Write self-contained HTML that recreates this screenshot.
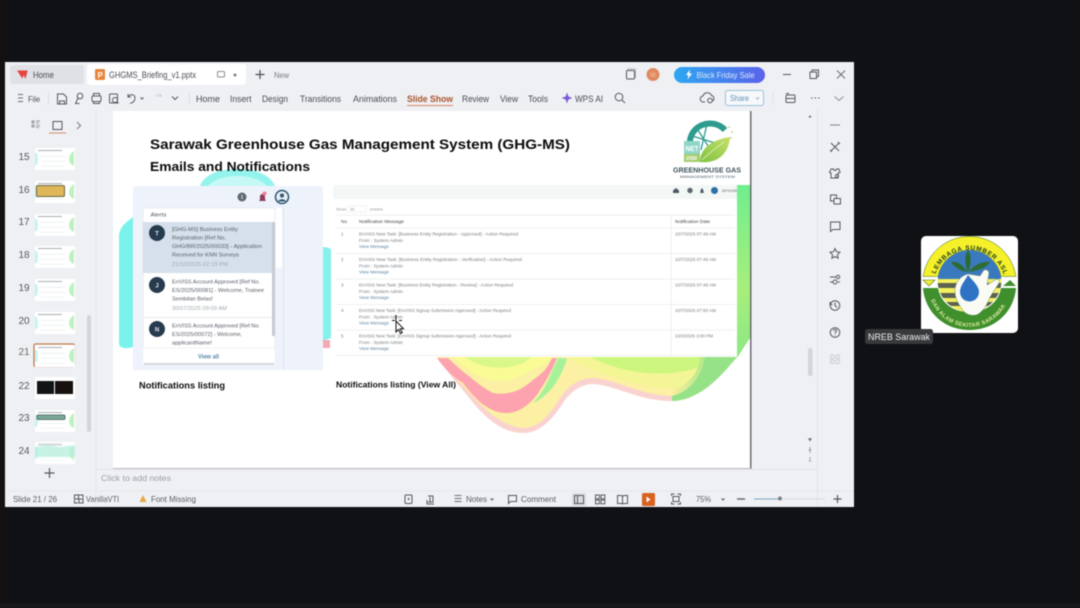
<!DOCTYPE html>
<html><head><meta charset="utf-8"><title>GHGMS Briefing</title>
<style>
html,body{margin:0;padding:0;background:#101114;width:1080px;height:608px;overflow:hidden}
svg{display:block;filter:blur(.5px)}
text{font-family:"Liberation Sans",sans-serif}
.u{font-size:9px;fill:#4a4c52}
.n{font-size:5px;fill:#5a5f66}
.i{fill:none;stroke:#55585e;stroke-width:1}
.num{font-size:10px;fill:#55585c;text-anchor:middle}
</style></head><body>
<svg width="1080" height="608" viewBox="0 0 1080 608" xmlns="http://www.w3.org/2000/svg">
<defs>
<linearGradient id="bf" x1="0" x2="1"><stop offset="0" stop-color="#2ea7f2"/><stop offset="1" stop-color="#5a63ea"/></linearGradient>
<linearGradient id="col" x1="0" x2="0" y1="0" y2="1"><stop offset="0" stop-color="#70ee8e"/><stop offset=".6" stop-color="#a8ee7c"/><stop offset="1" stop-color="#8be884"/></linearGradient>
<linearGradient id="rg" x1="0" x2="1" y1="0" y2="0"><stop offset="0" stop-color="#f6eea0"/><stop offset=".45" stop-color="#b9e88b"/><stop offset="1" stop-color="#86e486"/></linearGradient>
<linearGradient id="lf" x1="0" x2="1" y1="1" y2="0"><stop offset="0" stop-color="#7fc241"/><stop offset="1" stop-color="#c6e06a"/></linearGradient>
<clipPath id="stc"><circle cx="969.500" cy="280" r="32"/></clipPath>
<g id="th">
<rect x="0" y="0" width="40" height="22" fill="#fff"/>
<path d="M0 5h2q2 6 0 12H0z" fill="#c4f5f1"/>
<path d="M39 3q-5 3-5 8t5 7z" fill="#bdf2c0"/>
<rect x="3" y="2" width="24" height="1" fill="#a4afb3"/>
<rect x="6" y="8" width="24" height=".6" fill="#e0e6e8"/>
<rect x="6" y="13" width="24" height=".6" fill="#e4e9ea"/>
<rect x="6" y="18" width="24" height=".6" fill="#e6ebeb"/>
</g>
</defs>

<rect width="1080" height="608" fill="#101114"/>
<rect x="0" y="0" width="5" height="608" fill="#141210"/>
<rect x="0" y="603" width="1080" height="5" fill="#17181a"/>

<!-- window -->
<rect x="5" y="62" width="849" height="445" fill="#eef0f4"/>
<!-- tabs -->
<rect x="10" y="65" width="74" height="19" rx="3" fill="#dfe1e6"/>
<path d="M18 71h9l-1.600 6.500-1.800-3.600-1.400 3.600z" fill="#e4463f" stroke="#e4463f" stroke-width="1"/>
<text x="33" y="78" class="u" textLength="21" lengthAdjust="spacingAndGlyphs">Home</text>
<rect x="87" y="64" width="159" height="21" rx="3" fill="#fff"/>
<rect x="95" y="69" width="10" height="11" rx="1.500" fill="#e8843a"/>
<text x="97.500" y="78" font-size="8" fill="#fff" font-weight="bold">P</text>
<text x="109" y="78" class="u" textLength="87" lengthAdjust="spacingAndGlyphs">GHGMS_Briefing_v1.pptx</text>
<rect x="217.500" y="71.500" width="7" height="5.500" rx="1" class="i" style="stroke:#8a8d93"/>
<circle cx="235" cy="75" r="1.500" fill="#7b7e84"/>
<path d="M260 70v9M255.500 74.500h9" stroke="#4a4c52" stroke-width="1.200"/>
<text x="274" y="78" font-size="8.500" fill="#7b7e84" textLength="15" lengthAdjust="spacingAndGlyphs">New</text>

<rect x="626.500" y="70.500" width="8" height="8.500" rx="1.200" class="i"/>
<path d="M628 70v-1h7.500v9" fill="none" stroke="#9a9da3" stroke-width=".7"/>
<circle cx="653" cy="74.500" r="6.500" fill="#e08a5e"/>
<text x="653" y="77" font-size="6" fill="#f6c7ae" text-anchor="middle">W</text>
<rect x="674" y="67" width="91" height="16" rx="8" fill="url(#bf)"/>
<path d="M690 69.500l-4 5.500h2.500l-1 4.500 4.500-6h-2.700z" fill="#fff"/>
<text x="696.500" y="78" font-size="8.500" fill="#dbe6fb" textLength="58" lengthAdjust="spacingAndGlyphs">Black Friday Sale</text>
<path d="M783 74.500h8" stroke="#55585e" stroke-width="1"/>
<rect x="810" y="72" width="6.500" height="6.500" class="i"/><path d="M812 72v-2h6.500v6.500h-2" class="i"/>
<path d="M837 70.500l8 8M845 70.500l-8 8" stroke="#6a6d73" stroke-width="1"/>

<!-- ribbon -->
<path d="M18 94.500h5M18 98h5M18 101.500h5" stroke="#6a6d73" stroke-width=".9"/>
<text x="28" y="102" class="u" style="font-size:8.500px" textLength="12" lengthAdjust="spacingAndGlyphs">File</text>
<path d="M48.500 92v13" stroke="#dcdee2"/>
<path d="M57.500 94h6l3 3v7h-9z" class="i"/><path d="M59.500 104v-3h5v3" class="i" stroke-width=".8"/>
<circle cx="80" cy="96" r="2.800" class="i"/><path d="M78 98l-2.500 5.500h4" class="i"/>
<rect x="92" y="96" width="9" height="5.500" rx="1" class="i"/><path d="M93.500 96v-2.500h6V96M93.500 101v2.500h6V101" class="i"/>
<rect x="109.500" y="94" width="8" height="9" rx="1" class="i"/><circle cx="115" cy="100" r="2.500" fill="#eef0f4" stroke="#55585e"/><path d="M117 102l1.500 1.500" class="i"/>
<path d="M128 96.500c3-3 7-2 7 1.500s-3 5-5 5.500M128 94v3h3" class="i"/>
<path d="M140.500 97.500l1.500 1.500 1.500-1.500" class="i" stroke-width=".8"/>
<path d="M161 96c-2-2.500-5-1.500-5.500 1M161 94v2.500h-2.500" fill="none" stroke="#cfd2d6"/>
<path d="M172 96.500l3 3 3-3" class="i"/>
<path d="M189.500 92v13" stroke="#dcdee2"/>
<text x="196" y="102" class="u" textLength="24" lengthAdjust="spacingAndGlyphs">Home</text>
<text x="230" y="102" class="u" textLength="21.500" lengthAdjust="spacingAndGlyphs">Insert</text>
<text x="262" y="102" class="u" textLength="26" lengthAdjust="spacingAndGlyphs">Design</text>
<text x="300" y="102" class="u" textLength="41" lengthAdjust="spacingAndGlyphs">Transitions</text>
<text x="353" y="102" class="u" textLength="44" lengthAdjust="spacingAndGlyphs">Animations</text>
<text x="407" y="102" font-size="9" font-weight="bold" fill="#a8552b" textLength="46" lengthAdjust="spacingAndGlyphs">Slide Show</text>
<text x="462" y="102" class="u" textLength="27" lengthAdjust="spacingAndGlyphs">Review</text>
<text x="500" y="102" class="u" textLength="18" lengthAdjust="spacingAndGlyphs">View</text>
<text x="528" y="102" class="u" textLength="20" lengthAdjust="spacingAndGlyphs">Tools</text>
<rect x="407" y="105" width="46" height="1" fill="#d98a5f"/>
<path d="M567 92.500l1.400 4 4.100 1.500-4.100 1.500-1.400 4-1.400-4-4.100-1.500 4.100-1.500z" fill="#7a5cd6"/>
<text x="575" y="102" class="u" textLength="28" lengthAdjust="spacingAndGlyphs">WPS AI</text>
<circle cx="619" cy="97" r="3.800" class="i"/><path d="M622 100l3 3" class="i"/>
<path d="M705 102h-1.500a3 3 0 0 1-.5-6 4.500 4.500 0 0 1 8.500-.5 3 3 0 0 1 1 5.500" class="i"/><circle cx="710" cy="100.500" r="2.300" class="i" stroke-width=".8"/>
<rect x="725.500" y="90.500" width="38" height="15" rx="2" fill="#f6f8fb" stroke="#9dc2dc"/>
<text x="730" y="101" font-size="8.500" fill="#5f93b8" textLength="19" lengthAdjust="spacingAndGlyphs">Share</text>
<path d="M756 97.500l1.500 1.500 1.500-1.500" fill="none" stroke="#7ca7c4" stroke-width=".8"/>
<path d="M773 92v13" stroke="#e2e4e8"/>
<rect x="786" y="95" width="9" height="7.500" rx="1" class="i"/><path d="M786 93.500h3M786 98.500h9" class="i" stroke-width=".8"/>
<path d="M811 98h1.500M814.500 98h1.500M818 98h1.500" stroke="#5a5d63" stroke-width="1"/>
<path d="M834.500 96.500l4.500 4 4.500-4" fill="none" stroke="#8a8d93" stroke-width="1"/>

<!-- sidebar -->
<rect x="95.500" y="110" width="1" height="397" fill="#e3e5e9"/>
<path d="M32 121h2v2h-2zM32 125h2v2h-2z" fill="none" stroke="#777a80" stroke-width=".8"/><path d="M36 121h4M36 123h3M36 125.500h4M36 127.500h3" stroke="#777a80" stroke-width=".8"/>
<rect x="53" y="121.500" width="9" height="8" class="i"/>
<rect x="49" y="132.500" width="17" height="1" fill="#d98a5f"/>
<path d="M77 122l3.500 3.500-3.500 3.500" fill="none" stroke="#777a80" stroke-width="1"/>

<text x="24" y="160" class="num">15</text><use href="#th" x="35" y="148"/>
<text x="24" y="193" class="num">16</text><use href="#th" x="35" y="181"/>
<rect x="36.500" y="185.500" width="28" height="11" rx="1.500" fill="#dfb65a" stroke="#6b6845" stroke-width="1"/>
<text x="24" y="225" class="num">17</text><use href="#th" x="35" y="214"/>
<text x="24" y="258" class="num">18</text><use href="#th" x="35" y="246"/>
<text x="24" y="291" class="num">19</text><use href="#th" x="35" y="279"/>
<text x="24" y="324" class="num">20</text><use href="#th" x="35" y="312"/>
<text x="24" y="355" class="num" style="fill:#6d6a68">21</text>
<rect x="34" y="344" width="40.500" height="22.500" rx="1.500" fill="#fff" stroke="#c07a4a" stroke-width="1.300"/>
<use href="#th" x="35" y="345"/>
<text x="24" y="389" class="num">22</text>
<rect x="35" y="377" width="40" height="22" fill="#fff"/><rect x="37" y="381" width="17" height="13" fill="#101416"/><rect x="55" y="381" width="18" height="13" fill="#16100e"/>
<text x="24" y="421" class="num">23</text><use href="#th" x="35" y="410"/>
<rect x="37" y="415" width="28" height="4.500" rx="1" fill="#79a99b" stroke="#3f5a52" stroke-width=".8"/>
<text x="24" y="454" class="num">24</text>
<svg x="35" y="442" width="40" height="18" viewBox="0 0 40 18"><use href="#th"/><path d="M0 5q14-3 24 0l16-2v12H0z" fill="#b6f0dc" opacity=".75"/></svg>
<rect x="87" y="315" width="4" height="117" rx="2" fill="#d3d5da"/>
<path d="M49.500 468v10M44.500 473h10" stroke="#55585e" stroke-width="1.200"/>

<!-- work area + slide shadow -->
<rect x="751" y="110" width="66" height="360" fill="#eff0f4"/>
<rect x="113" y="111" width="637" height="358" fill="#fff"/>
<rect x="750" y="111" width="1.500" height="358" fill="#6b6d70"/>
<rect x="113" y="468" width="638" height="1.300" fill="#b9bbbf"/>
<rect x="817" y="110" width="1" height="397" fill="#e1e3e7"/>
<rect x="808" y="348" width="4.500" height="28" rx="2" fill="#d3d5da"/>
<path d="M810 115l-1.500 2.500h3z" fill="#6a6d73"/>
<path d="M810 441l-1.500-2.500h3zM808.500 450h3M810 447v6M808.500 461h3M810 457v3" fill="#6a6d73" stroke="#6a6d73" stroke-width=".6"/>

<!-- slide decoration -->
<path d="M200 186c4-12 20-17 37-17s33 5 38 17z" fill="#7af0ea" opacity=".8"/>
<path d="M208 186c6-7 18-10 29-10s24 3 30 10z" fill="#c6f9f6"/>
<path d="M133 217c-5 4-14 9-14 20v106c0 6 8 6 14 4z" fill="#7cf2ec"/>
<path d="M323 247c3 0 8 1 8 3v88c-3 1-5 2-8 2z" fill="#86f1ec"/>
<rect x="323" y="340" width="7" height="8" fill="#f5a9b5"/>
<!-- right green column -->
<path d="M737 185H750V338C745 345 741 352 737 358Z" fill="url(#col)"/>
<!-- wave -->
<path d="M437 357C447 372 463 390 475 405C490 422 505 433 523 433C540 433 552 420 563 403C570 392 580 385 592 384C612 384 640 401 670 401C695 401 715 383 730 365L738 356Z" fill="#fad3d0"/>
<path d="M437 357C450 372 465 388 478 402C492 416 507 427 523 428C540 428 550 414 560 398C568 386 578 379 592 378C612 378 640 395 670 396C695 396 715 380 730 362L737 357Z" fill="#fbf0a3"/>
<path d="M455 357C470 376 495 388 520 376C535 369 550 362 556 357Z" fill="#f9fb94"/>
<path d="M465 357C480 368 505 372 525 362L532 357Z" fill="#d9f78a"/>
<path d="M567 357C590 372 630 385 665 388C690 390 715 375 737 357Z" fill="#f4f595"/>
<path d="M590 357C620 372 655 378 690 370C705 366 720 362 730 357Z" fill="#cdf67e"/>
<path d="M672 401C695 401 715 383 730 365L738 356H700C700 372 688 385 674 390Z" fill="url(#rg)"/>
<path d="M672 401C694 401 715 383 730 365L738 356H705C703 375 690 392 672 396Z" fill="#96e287"/>
<path d="M437 358C447 372 455 378 463 383C472 395 480 403 487 407C495 412 500 413 507 413C515 413 522 409 527 405C533 400 537 396 540 390C548 378 553 368 557 358H552C550 362 548 366 545 370C540 375 537 377 533 380C526 386 520 390 513 392C505 394 499 394 493 393C485 389 477 383 470 377C462 371 455 365 448 358Z" fill="#fca3af"/>
<path d="M558 358H567C564 370 558 380 553 387C546 395 540 400 533 403C541 395 546 385 550 376C553 369 556 363 558 358Z" fill="#a6f29a"/>

<!-- Title -->
<text x="150" y="149" font-size="14" font-weight="bold" fill="#0b0b0b" textLength="420" lengthAdjust="spacingAndGlyphs">Sarawak Greenhouse Gas Management System (GHG-MS)</text>
<text x="150" y="171" font-size="12.500" font-weight="bold" fill="#0b0b0b" textLength="160" lengthAdjust="spacingAndGlyphs">Emails and Notifications</text>

<!-- slide logo -->
<path d="M690 144a20 19 0 0 1 35-14" fill="none" stroke="#2d9c8e" stroke-width="6"/>
<path d="M689 135l26 8M696 127l14 22M707 124l-6 26" stroke="#2d9c8e" stroke-width="1.300" fill="none"/>
<path d="M700 162c0-14 12-22 30-25-1 16-12 27-30 25z" fill="url(#lf)"/>
<path d="M702 160c8-8 14-12 22-18" stroke="#e6f3c0" stroke-width=".8" fill="none"/>
<rect x="684" y="141" width="16" height="21" fill="#8fd6c8"/>
<rect x="684" y="154" width="16" height="8" fill="#a3cc6a"/>
<text x="685.500" y="151" font-size="7" font-weight="bold" fill="#fff" textLength="13" lengthAdjust="spacingAndGlyphs">NET</text>
<text x="686" y="160" font-size="5.500" font-weight="bold" fill="#fff" textLength="11" lengthAdjust="spacingAndGlyphs">2050</text>
<circle cx="729" cy="127" r="1" fill="#d2d68a"/><circle cx="732" cy="132" r="1" fill="#d2d68a"/><circle cx="731" cy="138" r="1" fill="#d2d68a"/>
<text x="673" y="172.500" font-size="7" font-weight="bold" fill="#3f5460" textLength="68" lengthAdjust="spacingAndGlyphs">GREENHOUSE GAS</text>
<text x="680" y="178" font-size="4" fill="#4d5f68" textLength="55" lengthAdjust="spacingAndGlyphs">MANAGEMENT SYSTEM</text>

<!-- left panel -->
<rect x="133" y="186" width="190" height="184" fill="#eef3fb"/>
<rect x="143" y="208" width="139" height="60" fill="#fff" opacity=".85"/>
<rect x="283" y="208" width="1" height="162" fill="#e0e6ee"/>
<circle cx="242" cy="197" r="4.500" fill="#606a72"/><rect x="241.500" y="195" width="1" height="4" fill="#dde"/>
<path d="M259 201c1-1 1-2 1-4s1-3 2.500-3 2.500 1 2.500 3 0 3 1 4z" fill="#8f3d5b"/><circle cx="264.500" cy="193.500" r="2" fill="#ef7d95"/>
<circle cx="282" cy="197" r="6.500" fill="#e8eef5" stroke="#2f566f" stroke-width="1.500"/><circle cx="282" cy="195.500" r="2" fill="#2f566f"/><path d="M278 201.500c1-3 7-3 8 0" fill="#2f566f"/>

<rect x="143" y="208" width="132" height="155" rx="2" fill="#fff" stroke="#e3e6ea" stroke-width=".8"/>
<path d="M144 364h130" stroke="#cfd3d8" stroke-width="1.500"/>
<text x="150.500" y="216.500" font-size="5.800" fill="#4f565e" textLength="16" lengthAdjust="spacingAndGlyphs">Alerts</text>
<rect x="143" y="222" width="129" height="51" fill="#d5e0ec"/>
<rect x="272" y="222" width="3" height="114" fill="#c5cbd2"/>
<circle cx="157" cy="233" r="8" fill="#273b4f"/><text x="157" y="235.500" font-size="6" fill="#dfe6ee" text-anchor="middle" font-weight="bold">T</text>
<circle cx="157" cy="285" r="8" fill="#273b4f"/><text x="157" y="287.500" font-size="6" fill="#dfe6ee" text-anchor="middle" font-weight="bold">J</text>
<circle cx="157" cy="329" r="8" fill="#273b4f"/><text x="157" y="331.500" font-size="6" fill="#dfe6ee" text-anchor="middle" font-weight="bold">N</text>
<g fill="#5a6068" font-size="5.800">
<text x="172" y="231" textLength="66" lengthAdjust="spacingAndGlyphs">[GHG-MS] Business Entity</text>
<text x="172" y="239.500" textLength="54" lengthAdjust="spacingAndGlyphs">Registration [Ref No.</text>
<text x="172" y="248" textLength="90" lengthAdjust="spacingAndGlyphs">GHG/BR/2025/00033] - Application</text>
<text x="172" y="256.500" textLength="67" lengthAdjust="spacingAndGlyphs">Received for KNN Surveys</text>
<text x="172" y="283.500" textLength="88" lengthAdjust="spacingAndGlyphs">EnVISS Account Approved [Ref No.</text>
<text x="172" y="292" textLength="92" lengthAdjust="spacingAndGlyphs">ES/2025/00081] - Welcome, Trainee</text>
<text x="172" y="300.500" textLength="41" lengthAdjust="spacingAndGlyphs">Sembilan Belas!</text>
<text x="172" y="327.500" textLength="88" lengthAdjust="spacingAndGlyphs">EnVISS Account Approved [Ref No.</text>
<text x="172" y="336" textLength="70" lengthAdjust="spacingAndGlyphs">ES/2025/00072] - Welcome,</text>
<text x="172" y="344.500" textLength="40" lengthAdjust="spacingAndGlyphs">applicantName!</text>
</g>
<g fill="#a3aab0" font-size="5.500">
<text x="172" y="266" textLength="56" lengthAdjust="spacingAndGlyphs">21/10/2025 02:19 PM</text>
<text x="172" y="310" textLength="55" lengthAdjust="spacingAndGlyphs">30/07/2025 09:09 AM</text>
</g>
<path d="M143 317.500h129" stroke="#e1e4e8" stroke-width=".7"/>
<rect x="143" y="348" width="132" height="15" fill="#fff"/>
<path d="M143 348h132" stroke="#eceef0" stroke-width=".7"/>
<text x="198" y="358.500" font-size="6.500" font-weight="bold" fill="#5d8aa8" textLength="21" lengthAdjust="spacingAndGlyphs">View all</text>
<text x="139" y="388.500" font-size="8.800" font-weight="bold" fill="#0d0d0d" textLength="86" lengthAdjust="spacingAndGlyphs">Notifications listing</text>

<!-- right table -->
<rect x="333" y="185" width="404" height="172" fill="#fff"/>
<rect x="333" y="185" width="404" height="14" fill="#f3f7f5"/>
<path d="M673 190.500l3-2.500 3 2.500v2.500h-6z" fill="#4d5a63"/><circle cx="690" cy="190.500" r="2.700" fill="#5c666e"/><path d="M700 193c1-1 0-4 2-4.500 2 .5 1 3.500 2 4.500z" fill="#4d5a63"/>
<circle cx="714.500" cy="190.500" r="3.500" fill="#2f6fa3"/>
<text x="722" y="192" font-size="3.800" fill="#6d7278" textLength="15" lengthAdjust="spacingAndGlyphs">BPIHSB</text>
<text x="336" y="210.500" font-size="3.800" fill="#8c9196" textLength="10" lengthAdjust="spacingAndGlyphs">Show</text>
<rect x="347" y="206" width="19" height="6" fill="#fff" stroke="#e4e6e8" stroke-width=".5"/>
<text x="350" y="210.500" font-size="3.800" fill="#777">10</text>
<text x="370" y="210.500" font-size="3.800" fill="#8c9196" textLength="13" lengthAdjust="spacingAndGlyphs">entries</text>
<g stroke="#e9ebed" stroke-width=".7" fill="none">
<path d="M336 215h399M336 228h399M336 253.500h399M336 279h399M336 304.500h399M336 330h399M336 355.500h399M671 215v140"/>
</g>
<g font-size="4.500" fill="#3f454b">
<text x="341" y="223" textLength="7" lengthAdjust="spacingAndGlyphs">No.</text>
<text x="359" y="223" textLength="45" lengthAdjust="spacingAndGlyphs">Notification Message</text>
<text x="675" y="223" textLength="35" lengthAdjust="spacingAndGlyphs">Notification Date</text>
</g>
<g font-size="4.500" fill="#777d83">
<text x="341" y="235.500">1</text>
<text x="341" y="261">2</text>
<text x="341" y="286.500">3</text>
<text x="341" y="312">4</text>
<text x="341" y="337.500">5</text>
<text x="359" y="235.500" textLength="159" lengthAdjust="spacingAndGlyphs">EnVISS New Task: [Business Entity Registration - Approved] - Action Required</text>
<text x="359" y="242" textLength="44" lengthAdjust="spacingAndGlyphs">From : System Admin</text>
<text x="359" y="261" textLength="163" lengthAdjust="spacingAndGlyphs">EnVISS New Task: [Business Entity Registration - Verification] - Action Required</text>
<text x="359" y="267.500" textLength="44" lengthAdjust="spacingAndGlyphs">From : System Admin</text>
<text x="359" y="286.500" textLength="154" lengthAdjust="spacingAndGlyphs">EnVISS New Task: [Business Entity Registration - Review] - Action Required</text>
<text x="359" y="293" textLength="44" lengthAdjust="spacingAndGlyphs">From : System Admin</text>
<text x="359" y="312" textLength="152" lengthAdjust="spacingAndGlyphs">EnVISS New Task: [EnVISS Signup Submission Approved] - Action Required</text>
<text x="359" y="318.500" textLength="44" lengthAdjust="spacingAndGlyphs">From : System Admin</text>
<text x="359" y="337.500" textLength="152" lengthAdjust="spacingAndGlyphs">EnVISS New Task: [EnVISS Signup Submission Approved] - Action Required</text>
<text x="359" y="344" textLength="44" lengthAdjust="spacingAndGlyphs">From : System Admin</text>
<text x="675" y="235.500" textLength="41" lengthAdjust="spacingAndGlyphs">10/7/2025 07:49 AM</text>
<text x="675" y="261" textLength="41" lengthAdjust="spacingAndGlyphs">10/7/2025 07:49 AM</text>
<text x="675" y="286.500" textLength="41" lengthAdjust="spacingAndGlyphs">10/7/2025 07:49 AM</text>
<text x="675" y="312" textLength="41" lengthAdjust="spacingAndGlyphs">10/7/2025 07:50 AM</text>
<text x="675" y="337.500" textLength="38" lengthAdjust="spacingAndGlyphs">10/3/2025 3:00 PM</text>
</g>
<g font-size="4.500" fill="#5e89a5">
<text x="359" y="248" textLength="30" lengthAdjust="spacingAndGlyphs">View Message</text>
<text x="359" y="273.500" textLength="30" lengthAdjust="spacingAndGlyphs">View Message</text>
<text x="359" y="299" textLength="30" lengthAdjust="spacingAndGlyphs">View Message</text>
<text x="359" y="324.500" textLength="30" lengthAdjust="spacingAndGlyphs">View Message</text>
<text x="359" y="350" textLength="30" lengthAdjust="spacingAndGlyphs">View Message</text>
</g>
<text x="336" y="387.500" font-size="8.500" font-weight="bold" fill="#0d0d0d" textLength="120" lengthAdjust="spacingAndGlyphs">Notifications listing (View All)</text>
<!-- cursor -->
<path d="M396 321v11l2.500-2.500 2 4 1.700-.8-2-4h3.300z" fill="#fff" stroke="#111" stroke-width="1"/>
<path d="M396 315v5M392 320.500h3M399 320.500h3" stroke="#111" stroke-width="1"/>

<!-- right toolbar -->
<path d="M830 125h10" stroke="#808389" stroke-width="1"/>
<path d="M831 143l8 8M839 143l-8 8M830 150l2 2M840 144l-2-2" class="i" stroke-width="1.300"/>
<path d="M831 169h2.500a1.500 1.500 0 0 0 3 0h2.500l1 3.500-2 .5v5h-7v-5l-1.500-.5z" class="i"/><circle cx="837" cy="176" r="1.500" class="i" stroke-width=".8"/>
<rect x="830.500" y="195" width="6" height="6" class="i"/><rect x="834" y="198.500" width="6.500" height="5.500" fill="#eef0f4" stroke="#55585e"/>
<path d="M830.500 222h9.500v7.500h-7l-2.500 2z" class="i"/>
<path d="M835 248.500l1.500 3.200 3.500.5-2.500 2.500.6 3.500-3.100-1.700-3.100 1.700.6-3.500-2.500-2.500 3.500-.5z" class="i"/>
<path d="M830 277h6M830 282h2.500M838 282h2" class="i"/><circle cx="838" cy="277" r="1.700" class="i"/><circle cx="835" cy="282" r="2" class="i"/>
<circle cx="835" cy="305.500" r="4.800" class="i"/><path d="M835 302.500v3l2 2M830 302v2.500h2.500" class="i" stroke-width=".8"/>
<circle cx="835" cy="332.500" r="4.800" class="i"/><path d="M833.500 331c.2-2 3-2 3 0 0 1.300-1.500 1.300-1.500 2.500" class="i" stroke-width=".8"/><circle cx="835" cy="335.300" r=".5" fill="#55585e"/>
<g fill="none" stroke="#c8cacf" stroke-width=".9"><rect x="830.500" y="355" width="3.500" height="3.500" rx=".8"/><rect x="836" y="355" width="3.500" height="3.500" rx=".8"/><rect x="830.500" y="360" width="3.500" height="3.500" rx=".8"/><rect x="836" y="360" width="3.500" height="3.500" rx=".8"/></g>

<!-- notes / status -->
<rect x="96" y="469" width="721" height="1" fill="#e1e3e7"/>
<text x="101" y="481" font-size="8.500" fill="#9b9ea3" textLength="70" lengthAdjust="spacingAndGlyphs">Click to add notes</text>
<rect x="5" y="490.500" width="849" height="1" fill="#e6e8eb"/>
<g font-size="8.500" fill="#5b5e64">
<text x="13" y="502" textLength="44" lengthAdjust="spacingAndGlyphs">Slide 21 / 26</text>
<text x="86" y="502" textLength="33" lengthAdjust="spacingAndGlyphs">VanillaVTI</text>
<text x="151" y="502" textLength="45" lengthAdjust="spacingAndGlyphs">Font Missing</text>
<text x="466" y="502" textLength="21" lengthAdjust="spacingAndGlyphs">Notes</text>
<text x="521" y="502" textLength="35" lengthAdjust="spacingAndGlyphs">Comment</text>
<text x="696" y="502" textLength="15" lengthAdjust="spacingAndGlyphs">75%</text>
</g>
<rect x="74.500" y="495" width="4" height="4" class="i" stroke-width=".8"/><rect x="79" y="499" width="4" height="4" class="i" stroke-width=".8"/><path d="M79 495h4v3M78 503h-3.500v-3" class="i" stroke-width=".8"/>
<path d="M143 495l3.500 7h-7z" fill="#e9a83f"/>
<rect x="405" y="495" width="7" height="8.500" rx="1" class="i"/><path d="M408 497.500l2 1.500-2 1.500z" fill="#55585e"/>
<path d="M428 496h5v6h-5M430 497v5" class="i"/><path d="M427 500v4h7" class="i" stroke-width=".8"/>
<path d="M454.500 495.500h7M454.500 498.500h7M454.500 501.500h7" stroke="#6a6d73" stroke-width=".9"/>
<path d="M490.500 498.500l1.500 1.500 1.500-1.500" class="i" stroke-width=".8"/>
<path d="M508.500 495.500h8v6h-6l-2 2z" class="i"/>
<rect x="572" y="493" width="14" height="13" fill="#d9dbdf"/>
<rect x="574.500" y="495.500" width="9" height="8" class="i"/><path d="M577.500 495.500v8" class="i"/>
<g class="i"><rect x="595.500" y="495" width="3.800" height="3.800"/><rect x="601" y="495" width="3.800" height="3.800"/><rect x="595.500" y="500" width="3.800" height="3.800"/><rect x="601" y="500" width="3.800" height="3.800"/></g>
<path d="M617.500 495.500h4l1 1 1-1h4v8h-4l-1 .5-1-.5h-4zM622.500 496.500v7" class="i"/>
<rect x="642" y="493" width="13" height="13" rx="1.500" fill="#d9631e"/>
<path d="M646.500 496.500l4 3-4 3z" fill="#fff"/>
<rect x="673" y="496.500" width="6" height="5" class="i" stroke-width=".8"/><path d="M671.500 496v-2h3M677.500 494h3v2M680.500 502v2h-3M674.500 504h-3v-2" class="i"/>
<path d="M721.500 498.500l1.500 1.500 1.500-1.500" class="i" stroke-width=".8"/>
<path d="M737 499h8" stroke="#55585e" stroke-width="1.300"/>
<path d="M754 499h24" stroke="#7fa7c0" stroke-width="1"/><path d="M783 499h42" stroke="#d8dade" stroke-width="1"/>
<circle cx="780" cy="498.500" r="2" fill="#7d8087"/>
<path d="M837.500 495v8M833.500 499h8" stroke="#55585e" stroke-width="1.200"/>

<!-- right logo tile -->
<rect x="921" y="236" width="97" height="97" rx="5" fill="#fff"/>
<path d="M923 276.500A47 47 0 0 1 1016 276.500H1001A32 32 0 0 0 938 276.500Z" fill="#f5f02a" stroke="#3b6d2c" stroke-width=".5"/>
<path d="M938 276.500A32 32 0 0 1 1001 276.500V279H938Z" fill="#3a79bd"/>
<path d="M923 288H938C940 300 950 312 969.500 312C989 312 999 300 1001 288H1016C1014 312 995 330 969.500 330C944 330 925 312 923 288Z" fill="#3f8f2d"/>
<g clip-path="url(#stc)">
<rect x="937" y="279" width="65" height="4" fill="#f3ef5c"/>
<rect x="937" y="283" width="65" height="5" fill="#5b6350"/>
<rect x="937" y="288" width="65" height="5" fill="#f3ef5c"/>
<rect x="937" y="293" width="65" height="5" fill="#5b6350"/>
<rect x="937" y="298" width="65" height="4" fill="#f3ef5c"/>
<rect x="937" y="302" width="65" height="4" fill="#5b6350"/>
<rect x="937" y="306" width="65" height="6" fill="#f3ef5c"/>
</g>
<path d="M923 280H935L929 286Z" fill="#f5f02a" stroke="#3f6f2c" stroke-width=".6"/>
<path d="M1003 286L1010 280L1016 286Z" fill="#3f8f2d"/>
<path id="ta" d="M935.500 274A36 36 0 0 1 1003.500 274" fill="none"/>
<text font-size="6.500" font-weight="bold" fill="#1c3a20" letter-spacing=".7"><textPath href="#ta">LEMBAGA SUMBER ASLI</textPath></text>
<path id="tb" d="M931 300A41 41 0 0 0 1008 300" fill="none"/>
<text font-size="5.600" font-weight="bold" fill="#dbe89a" letter-spacing=".35"><textPath href="#tb">DAN ALAM SEKITAR SARAWAK</textPath></text>
<path d="M955 291C955 283 960 276 968 274L980 276L984 270Q988 269 989 273L987 285L997 279Q1000 280 999 283L990 297C987 305 982 313 976 315C970 316 965 314 962 309C958 303 955 298 955 291Z" fill="#fbfbf5" stroke="#6e8f6e" stroke-width=".5"/>
<path d="M968 275C964 282 960 286 960 292A9.500 9.500 0 0 0 979 292C979 286 973 281 968 275Z" fill="#2f74c4"/>
<path d="M968 273C965 265 964 257 968 250C972 257 971 265 968 273ZM967 272C961 271 955 268 951 262C958 261 963 265 967 272ZM969 272C975 271 986 269 990 262C983 261 973 265 969 272Z" fill="#2c6c33"/>
<rect x="865" y="329" width="68" height="15" rx="2.500" fill="#38393c"/>
<text x="868" y="340" font-size="9.500" fill="#f0f0f0" textLength="62" lengthAdjust="spacingAndGlyphs">NREB Sarawak</text>
</svg>
</body></html>
